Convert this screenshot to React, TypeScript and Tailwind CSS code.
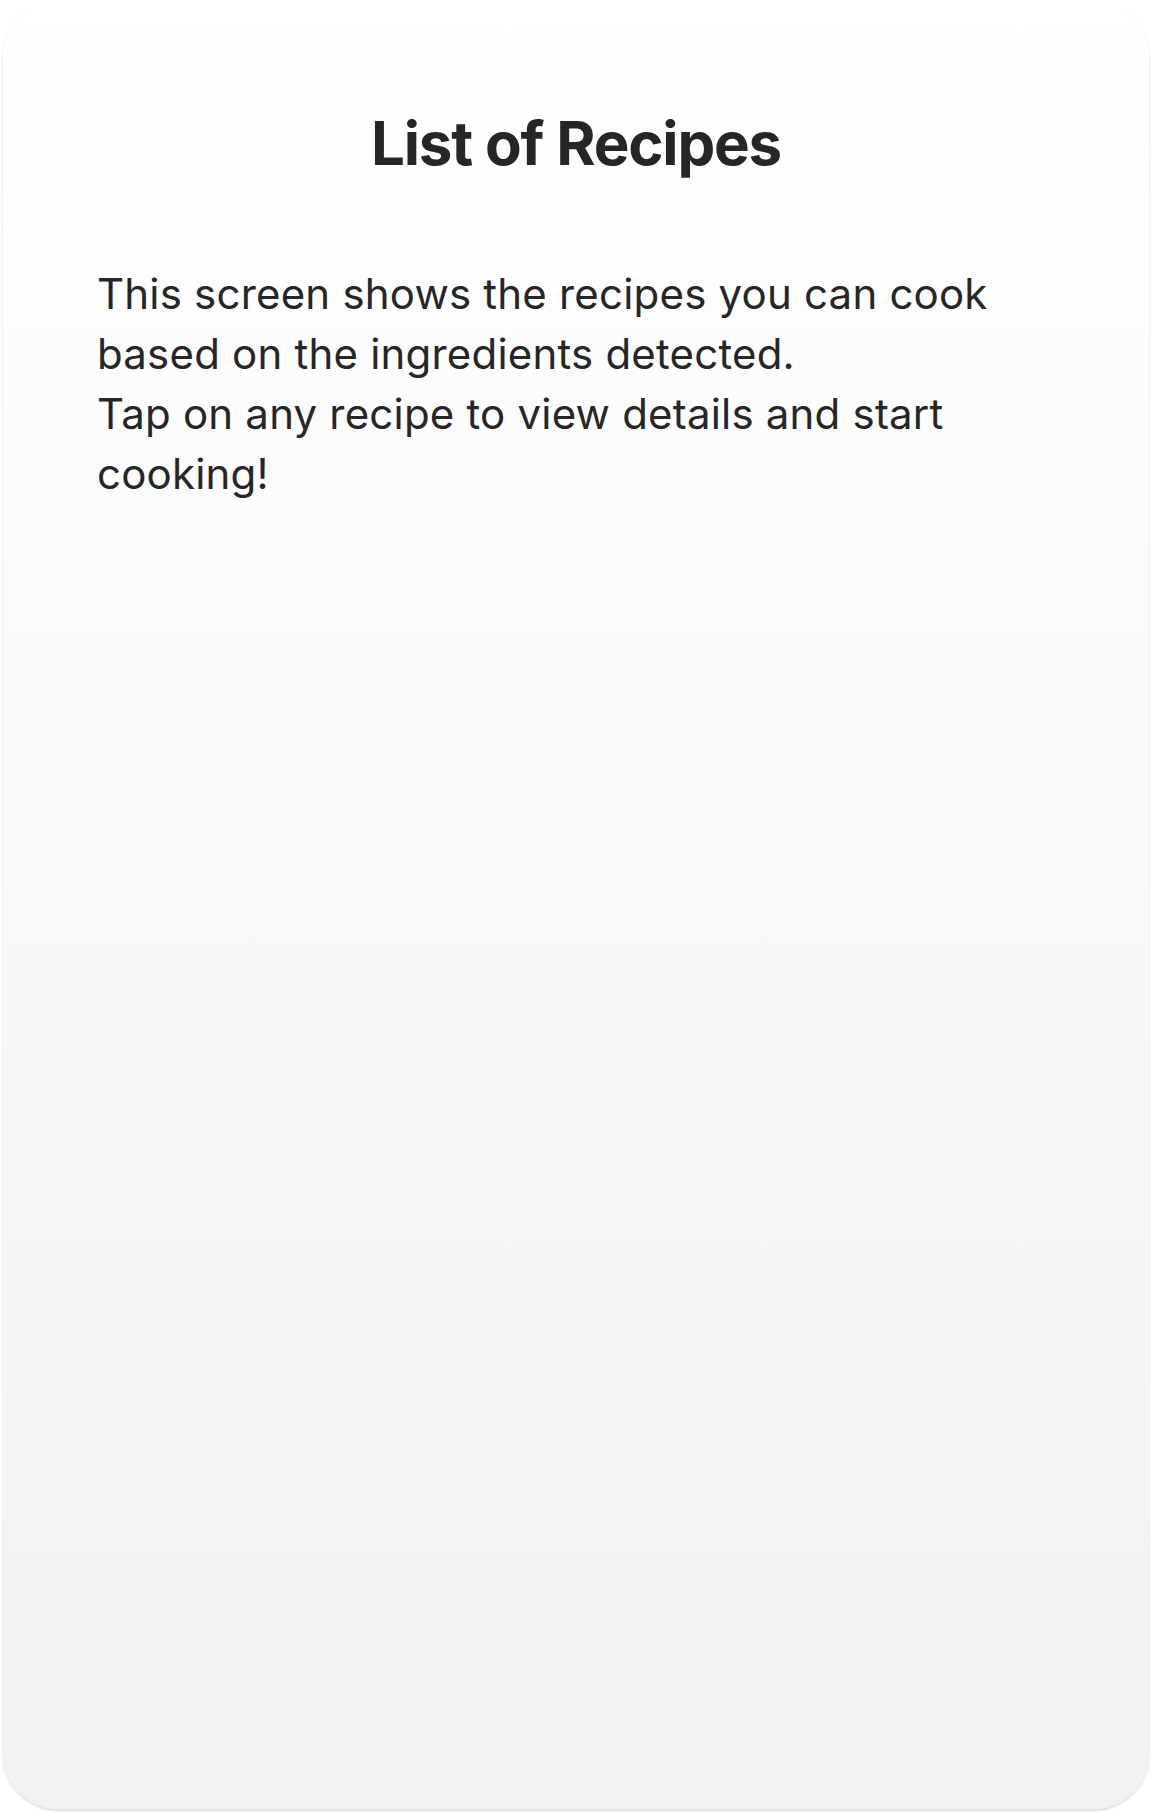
import React from "react";

export default function App() {
  return (
    <div className="w-[1152px] h-[1812px] bg-white px-[3px] pb-[3px]" style={{ fontFamily: "Inter, 'Noto Sans', sans-serif" }}>
      <div className="h-full w-full rounded-[56px] bg-gradient-to-b from-white to-[#f1f1f1] shadow-[0_2px_3px_rgba(0,0,0,0.14)] px-[94px] pt-[107px]">
        <h1 className="text-center text-[60px] leading-[1.2] font-bold tracking-[-0.02em] text-[#262626]">
          List of Recipes
        </h1>
        <div className="mt-[85px] text-[42px] leading-[60px] tracking-[0.2px] text-[#262626]">
          <p>This screen shows the recipes you can cook based on the ingredients detected.</p>
          <p>Tap on any recipe to view details and start cooking!</p>
        </div>
      </div>
    </div>
  );
}
